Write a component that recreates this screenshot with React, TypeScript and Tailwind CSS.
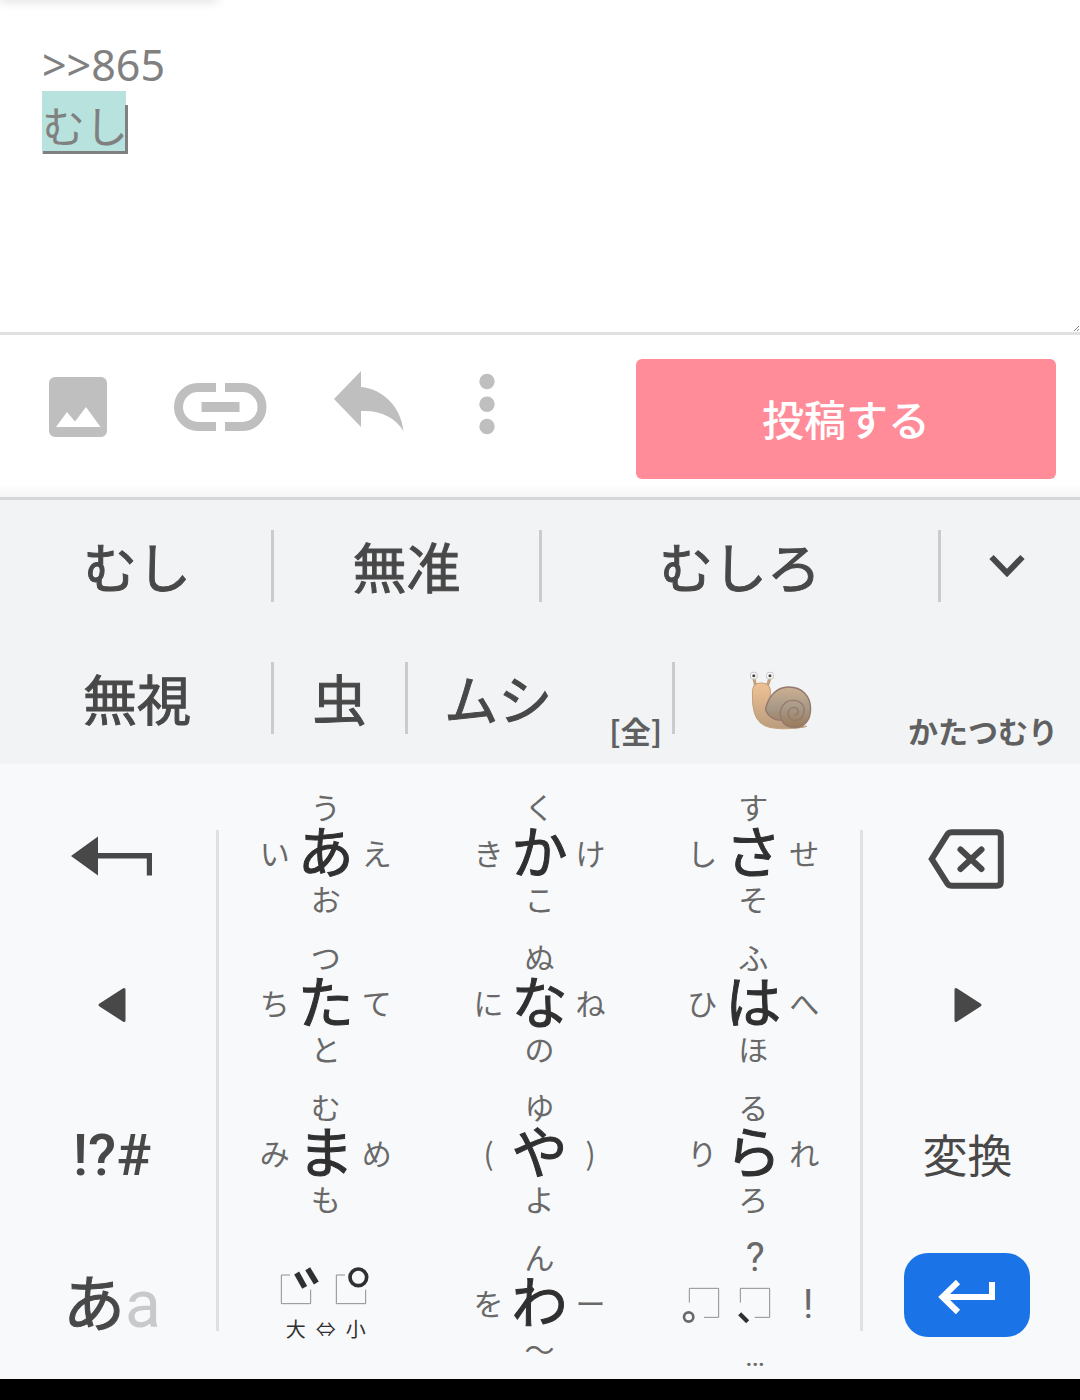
import { useState, type ReactNode } from "react"

type FlickKey = {
  center: string
  left: string
  up: string
  right: string
  down: string
}

const KEY_ROWS: FlickKey[][] = [
  [
    { center: "あ", left: "い", up: "う", right: "え", down: "お" },
    { center: "か", left: "き", up: "く", right: "け", down: "こ" },
    { center: "さ", left: "し", up: "す", right: "せ", down: "そ" },
  ],
  [
    { center: "た", left: "ち", up: "つ", right: "て", down: "と" },
    { center: "な", left: "に", up: "ぬ", right: "ね", down: "の" },
    { center: "は", left: "ひ", up: "ふ", right: "へ", down: "ほ" },
  ],
  [
    { center: "ま", left: "み", up: "む", right: "め", down: "も" },
    { center: "や", left: "(", up: "ゆ", right: ")", down: "よ" },
    { center: "ら", left: "り", up: "る", right: "れ", down: "ろ" },
  ],
]

const WA_KEY: FlickKey = { center: "わ", left: "を", up: "ん", right: "ー", down: "〜" }

function ImageIcon() {
  return (
    <svg className="h-[66px] w-[58px]" viewBox="0 0 58 66" fill="currentColor">
      <path
        fillRule="evenodd"
        d="M6 6h46a6 6 0 0 1 6 6v48a6 6 0 0 1-6 6H6a6 6 0 0 1-6-6V12a6 6 0 0 1 6-6zM7 56h44.5L37 36 26 50.500 18 41z"
      />
    </svg>
  )
}

function LinkIcon() {
  return (
    <svg className="h-[66px] w-[93px]" viewBox="0 0 93 66" fill="none" stroke="currentColor" strokeWidth="9">
      <path d="M42 16.500H24a19.500 19.500 0 0 0 0 39h18M51 16.500h17.500a19.500 19.500 0 0 1 0 39H51" />
      <path d="M27.500 36h38" strokeWidth="10" />
    </svg>
  )
}

function ReplyIcon() {
  return (
    <svg className="h-[66px] w-[70px]" viewBox="0 0 70 66" fill="currentColor">
      <path d="M0 28 27 0v16c22 2 40 20 42.500 44C61 46 46 39 27 40v16z" />
    </svg>
  )
}

function MoreIcon() {
  return (
    <svg className="h-[66px] w-8" viewBox="0 0 32 66" fill="currentColor">
      <circle cx="16" cy="10.500" r="7.700" />
      <circle cx="16" cy="33.300" r="7.700" />
      <circle cx="16" cy="55.500" r="7.700" />
    </svg>
  )
}

function Snail() {
  return (
    <svg className="mt-1 h-[60px] w-16" viewBox="610 516 186 180" preserveAspectRatio="none">
      <defs>
        <linearGradient id="body" x1="0" y1="0" x2="0" y2="1">
          <stop offset="0" stopColor="#f0c294" />
          <stop offset="1" stopColor="#b99c7e" />
        </linearGradient>
        <linearGradient id="shell" x1="0" y1="0" x2="0" y2="1">
          <stop offset="0" stopColor="#cdb091" />
          <stop offset="0.5" stopColor="#a89988" />
          <stop offset="1" stopColor="#9a7a58" />
        </linearGradient>
      </defs>
      <path d="M624 540l5 22M671 540l-7 22" stroke="#c4a17c" strokeWidth="9" strokeLinecap="round" />
      <path
        d="M620 580c0-17 9-25 25-25 17 0 27 8 27 25v50l40 45c25 9 45 9 66 10-15 6-40 7-70 7-35 0-60-6-76-32-12-22-12-50-12-80z"
        fill="url(#body)"
        stroke="#c4a17c"
        strokeWidth="3"
      />
      <circle cx="624" cy="533" r="10" fill="#fff" stroke="#c9c9c9" strokeWidth="3" />
      <circle cx="671" cy="533" r="10" fill="#fff" stroke="#c9c9c9" strokeWidth="3" />
      <circle cx="624" cy="533" r="4.500" fill="#444" />
      <circle cx="671" cy="533" r="4.500" fill="#444" />
      <path
        d="M658 633c8-38 32-66 67-66 40 0 64 28 64 65 0 34-18 57-46 57-18 0-32-8-38-22-24 0-42-14-47-34z"
        fill="url(#shell)"
        stroke="#947970"
        strokeWidth="4"
      />
      <path
        d="M705 667c-12-31 5-60 33-60 23 0 35 17 32 35-2 17-15 26-29 25-12-1-18-11-17-22 1-10 8-17 17-17 8 1 13 7 12 14-1 6-5 9-10 9"
        fill="none"
        stroke="#947970"
        strokeWidth="4"
      />
    </svg>
  )
}

function Divider() {
  return <span className="h-[72px] w-[3px] shrink-0 bg-[#c9cbcd]" />
}

function Candidate({ children, note, noteClass = "" }: { children: ReactNode; note?: string; noteClass?: string }) {
  return (
    <button type="button" className="flex h-full min-w-0 flex-1 items-center">
      <span className="flex flex-1 justify-center whitespace-nowrap [-webkit-text-stroke-width:1px]">{children}</span>
      {note && (
        <span className={`self-end whitespace-nowrap pb-[10px] pl-6 text-[30px] leading-[48px] font-bold text-[#606060] ${noteClass}`}>
          {note}
        </span>
      )}
    </button>
  )
}

function Flick({ k }: { k: FlickKey }) {
  return (
    <button
      type="button"
      className="grid grid-cols-[30px_72px_30px] grid-rows-[32px_60px_32px] place-content-center items-center justify-items-center pb-1 text-[30px] leading-8 text-[#696969]"
    >
      <span className="col-start-2 row-start-1">{k.up}</span>
      <span className="col-start-1 row-start-2">{k.left}</span>
      <span className="col-start-2 row-start-2 self-start text-[56px] leading-[54px] text-[#303030] [-webkit-text-stroke-width:1px]">
        {k.center}
      </span>
      <span className="col-start-3 row-start-2">{k.right}</span>
      <span className="col-start-2 row-start-3">{k.down}</span>
    </button>
  )
}

function VoicingKey() {
  return (
    <button type="button" className="flex flex-col items-center justify-center pb-1 text-[#303030]">
      <svg className="h-[44px] w-[94px]" viewBox="840 550 282 132" fill="none" stroke="currentColor">
        <path
          d="M873 583h-26v86h88v-42M1038 583h-26v86h88v-42"
          stroke="#8f8f8f"
          strokeWidth="3"
        />
        <path d="M893 577l24 43M926 564l26 43" strokeWidth="17" />
        <circle cx="1078" cy="590" r="25" strokeWidth="11" />
      </svg>
      <span className="mt-[9px] flex gap-[10px] text-[20px] leading-6">
        <span>大</span>
        <span>⇔</span>
        <span>小</span>
      </span>
    </button>
  )
}

function PunctuationKey() {
  return (
    <button
      type="button"
      aria-label="句読点"
      className="grid grid-rows-[38px_60px_44px] place-content-center justify-items-center pt-2 pl-1 text-[#696969]"
    >
      <span className="font-[Roboto] text-[40px] leading-[42px]">?</span>
      <span className="flex items-center gap-8 pr-4">
        <svg className="h-[39px] w-[90px]" viewBox="750 618 270 117" fill="none" stroke="#8f8f8f" strokeWidth="3">
          <path d="M775 668v-43h88v87h-44M928 668v-43h88v87h-45" />
          <circle cx="773" cy="711" r="14" stroke="#696969" strokeWidth="8" />
          <path d="M926 701l24 24" stroke="#303030" strokeWidth="13" />
        </svg>
        <span className="font-[Roboto] text-[40px] leading-[60px]">!</span>
      </span>
      <span className="font-[Roboto] text-[30px] leading-[42px]">…</span>
    </button>
  )
}

export default function App() {
  const [text, setText] = useState(">>865\nむし")

  return (
    <div
      lang="ja"
      className="flex min-h-screen flex-col bg-white font-['Noto_Sans_CJK_JP',sans-serif] text-[#484848]"
    >
      <section className="relative h-[335px] border-b-[3px] border-[#e1e1e1]">
        <div className="absolute -top-2 left-0 h-2 w-[218px] shadow-[0_0_12px_rgba(0,0,0,0.18)]" />
        {/* composing text: tint, underline and caret */}
        <div className="absolute top-[91px] left-[42px] h-[63px] w-[84px] bg-[#b8e2dd]" />
        <div className="absolute top-[151px] left-[43px] h-[3px] w-[85px] bg-[#808080]" />
        <div className="absolute top-[105px] left-[125px] h-[48px] w-[3px] bg-[#808080]" />
        <textarea
          aria-label="本文"
          value={text}
          onChange={(e) => setText(e.target.value)}
          className="relative block h-full w-full resize-none bg-transparent px-[42px] pt-[34px] font-['Noto_Sans','Noto_Sans_CJK_JP',sans-serif] text-[43px] leading-[62px] text-[#808080] outline-none"
        />
        <svg className="absolute right-0 bottom-0 h-2 w-2" viewBox="0 0 8 8" stroke="#555" strokeDasharray="1 0.500">
          <path d="M2 7l5-5M5 7l2-2" />
        </svg>
      </section>

      <section className="flex h-[165px] items-start justify-between border-b-[3px] border-[#d5d6d6] bg-linear-to-t from-[#f5f5f5] to-white to-8% pt-6 pr-6 pl-[49px]">
        <div className="flex gap-[67px] pt-3 text-[#bfbfbf]">
          <button type="button" aria-label="画像"><ImageIcon /></button>
          <button type="button" aria-label="リンク"><LinkIcon /></button>
          <button type="button" aria-label="返信"><ReplyIcon /></button>
          <button type="button" aria-label="その他"><MoreIcon /></button>
        </div>
        <button type="button" className="h-[120px] w-[420px] rounded-md bg-[#ff8c98] pb-1 text-[42px] font-medium text-white">
          投稿する
        </button>
      </section>

      <section className="bg-[#f1f3f5] text-[54px] leading-[72px]">
        <div className="grid h-[132px] grid-cols-[274fr_268fr_399fr_139fr]">
          <div className="flex items-center pl-[3px]"><Candidate>むし</Candidate><Divider /></div>
          <div className="flex items-center"><Candidate>無准</Candidate><Divider /></div>
          <div className="flex items-center"><Candidate>むしろ</Candidate><Divider /></div>
          <button type="button" aria-label="候補を開く" className="flex items-center justify-center pr-2">
            <svg className="h-6 w-9" viewBox="0 0 36 24" fill="none" stroke="currentColor" strokeWidth="6">
              <path d="M2.500 3 18 19 33.500 3" />
            </svg>
          </button>
        </div>
        <div className="grid h-[132px] grid-cols-[274fr_134fr_267fr_405fr]">
          <div className="flex items-center pl-[3px]"><Candidate>無視</Candidate><Divider /></div>
          <div className="flex items-center"><Candidate>虫</Candidate><Divider /></div>
          <div className="flex items-center pl-[3px]">
            <Candidate note="[全]" noteClass="pr-[10px]">ムシ</Candidate>
            <Divider />
          </div>
          <div className="flex items-center pl-[3px]">
            <Candidate note="かたつむり" noteClass="pr-[22px]"><Snail /></Candidate>
          </div>
        </div>
      </section>

      <section className="flex flex-1 bg-[#f8f9fb] px-2 pt-[15px]">
        <div className="grid flex-[208] auto-rows-[150px]">
          <button type="button" aria-label="戻す" className="flex items-center justify-center pt-1">
            <svg className="h-10 w-[82px]" viewBox="0 0 82 40" fill="currentColor">
              <path d="M0 20 27 .500V17h54v22.500h-5.200V22.500H27v17z" />
            </svg>
          </button>
          <button type="button" aria-label="左へ" className="flex items-center justify-center pt-[2px]">
            <svg className="h-9 w-7" viewBox="0 0 28 36" fill="currentColor" stroke="currentColor" strokeWidth="3" strokeLinejoin="round">
              <path d="M2 18 26 2.500v31z" />
            </svg>
          </button>
          <button type="button" className="pt-[2px] font-[Roboto] text-[58px] font-medium">!?#</button>
          <button type="button" className="flex items-baseline justify-center pt-[26px]">
            <span className="text-[62px] leading-[90px] [-webkit-text-stroke-width:1px]">あ</span>
            <span className="font-[Roboto] text-[66px] leading-[90px] text-[#c8c9ca]">a</span>
          </button>
        </div>

        <span className="mt-[51px] h-[501px] w-[3px] bg-[#dfe1e1]" />

        <div className="grid flex-[641] auto-rows-[150px] grid-cols-3">
          {KEY_ROWS.flat().map((k) => (
            <Flick key={k.center} k={k} />
          ))}
          <VoicingKey />
          <Flick k={WA_KEY} />
          <PunctuationKey />
        </div>

        <span className="mt-[51px] h-[501px] w-[3px] bg-[#dfe1e3]" />

        <div className="grid flex-[209] auto-rows-[150px]">
          <button type="button" aria-label="削除" className="flex items-center justify-center pt-[10px] pr-1">
            <svg className="h-[60px] w-[76px]" viewBox="0 0 76 60" fill="none" stroke="currentColor" strokeWidth="6">
              <path d="M24 3.200h45q3.800 0 3.800 4v45.600q0 4-3.800 4H24q-3 0-4.500-2L3.800 30 19.500 5.200q1.500-2 4.500-2z" />
              <path d="M32.500 20.500l21 19.500M53.500 20.500l-21 19.500" strokeLinecap="round" />
            </svg>
          </button>
          <button type="button" aria-label="右へ" className="flex items-center justify-center pt-[2px]">
            <svg className="h-9 w-7" viewBox="0 0 28 36" fill="currentColor" stroke="currentColor" strokeWidth="3" strokeLinejoin="round">
              <path d="M26 18 2 2.500v31z" />
            </svg>
          </button>
          <button type="button" className="text-[45px]">変換</button>
          <div className="flex items-center justify-center pr-[2px] pb-[18px]">
            <button
              type="button"
              aria-label="改行"
              className="flex h-[84px] w-[126px] items-center justify-center rounded-3xl bg-[#1b73e8] pt-1 text-white"
            >
              <svg className="h-9 w-[58px]" viewBox="0 0 58 36" fill="none" stroke="currentColor" strokeWidth="6">
                <path d="M20 3 4.500 18 20 33M5 18h49V3" />
              </svg>
            </button>
          </div>
        </div>
      </section>

      <footer className="h-[21px] bg-black" />
    </div>
  )
}
